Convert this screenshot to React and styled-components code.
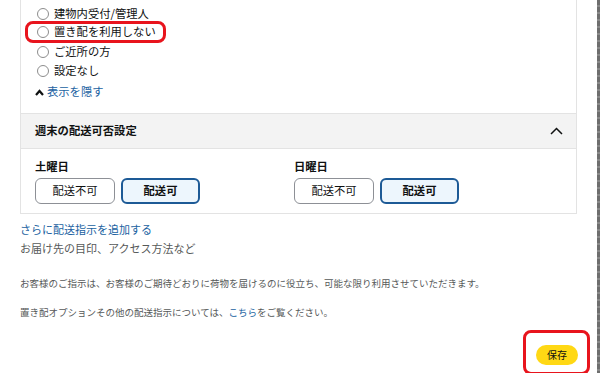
import React from 'react';
import styled, { createGlobalStyle } from 'styled-components';

const GlobalStyle = createGlobalStyle`
  html, body {
    margin: 0;
    padding: 0;
    background: #fff;
  }
  body {
    font-family: "Noto Sans CJK JP", "Noto Sans", sans-serif;
    color: #0f1111;
  }
`;

const Page = styled.div`
  width: 600px;
  height: 373px;
  overflow: hidden;
  display: flex;
`;

const Main = styled.div`
  width: 557px;
  padding-left: 20px;
  display: flex;
  flex-direction: column;
`;

const Gutter = styled.div`
  flex: 1;
`;

const ScrollEdge = styled.div`
  width: 3px;
  background: repeating-linear-gradient(
    180deg,
    #6e6e6e 0px,
    #6e6e6e 5px,
    #8a8a8a 5px,
    #8a8a8a 7px
  );
`;

const Panel = styled.div`
  border: 1px solid #e3e3e3;
  border-top: none;
`;

const RadioList = styled.div`
  padding: 4px 0 11px 16px;
  display: flex;
  flex-direction: column;
`;

const RadioRow = styled.label`
  display: flex;
  align-items: center;
  gap: 5px;
  height: 19px;
  font-size: 11.3px;
  line-height: 1;
  color: #0f1111;
  box-sizing: border-box;
  align-self: flex-start;

  ${({ $marked }) =>
    $marked &&
    `
    height: 22px;
    margin: -2px 0 -1px -12px;
    padding: 0 7px 0 9px;
    border: 3px solid #e8141d;
    border-radius: 8px;
  `}
`;

const Circle = styled.span`
  width: 10px;
  height: 10px;
  border: 1px solid #8d8d8d;
  border-radius: 50%;
  background: #fff;
`;

const ToggleLink = styled.a`
  display: flex;
  align-items: center;
  gap: 3px;
  height: 20px;
  margin-top: 2px;
  margin-left: -2px;
  font-size: 11.3px;
  line-height: 1;
  color: #2162a1;
  text-decoration: none;
`;

const SectionHeader = styled.div`
  height: 34px;
  background: #f3f3f3;
  border-top: 1px solid #e3e3e3;
  border-bottom: 1px solid #e3e3e3;
  display: flex;
  align-items: center;
  justify-content: space-between;
  padding: 0 13px 0 14px;
`;

const HeaderTitle = styled.span`
  font-size: 11.3px;
  font-weight: 700;
  line-height: 1;
`;

const SectionBody = styled.div`
  display: grid;
  grid-template-columns: 259px 1fr;
  padding: 10px 14px 9px 14px;
`;

const Day = styled.div`
  display: flex;
  flex-direction: column;
`;

const DayLabel = styled.span`
  font-size: 11.3px;
  font-weight: 700;
  line-height: 14px;
  margin-bottom: 5px;
`;

const ButtonRow = styled.div`
  display: flex;
  gap: 6px;
`;

const Choice = styled.button`
  box-sizing: border-box;
  height: 26px;
  width: ${({ $w }) => $w}px;
  border-radius: 6px;
  font-family: inherit;
  font-size: 11.3px;
  line-height: 1;
  padding: 0;
  cursor: pointer;
  color: #0f1111;
  border: ${({ $active }) => ($active ? '2px solid #1d5a96' : '1px solid #8d9096')};
  background: ${({ $active }) => ($active ? '#edf6fd' : '#fff')};
  font-weight: ${({ $active }) => ($active ? 700 : 400)};
`;

const Extra = styled.div`
  display: flex;
  flex-direction: column;
  margin-top: 7px;
`;

const AddLink = styled.a`
  font-size: 11px;
  line-height: 17px;
  color: #2162a1;
  text-decoration: none;
`;

const Hint = styled.span`
  font-size: 11px;
  line-height: 20px;
  color: #565959;
`;

const Note = styled.p`
  margin: ${({ $top }) => $top}px 0 0;
  font-size: 9.5px;
  line-height: 14px;
  color: #565959;
`;

const InlineLink = styled.a`
  color: #2162a1;
  text-decoration: none;
`;

const Footer = styled.div`
  display: flex;
  justify-content: flex-end;
  margin-top: 11px;
  margin-right: -13px;
`;

const Marked = styled.div`
  border: 3px solid #e8141d;
  border-radius: 8px;
  padding: 7px 9px 7px 10px;
`;

const SaveButton = styled.button`
  width: 42px;
  height: 20px;
  border: none;
  border-radius: 10px;
  background: #ffd814;
  font-family: inherit;
  font-size: 10px;
  line-height: 1;
  color: #0f1111;
  padding: 0;
`;

const options = ['建物内受付/管理人', '置き配を利用しない', 'ご近所の方', '設定なし'];

const days = [
  { label: '土曜日' },
  { label: '日曜日' },
];

const App = () => {
  return (
    <Page>
      <GlobalStyle />
      <Main>
        <Panel>
          <RadioList>
            {options.map((o, i) => (
              <RadioRow key={o} $marked={i === 1}>
                <Circle />
                {o}
              </RadioRow>
            ))}
            <ToggleLink href="#">
              <svg width="9" height="7" viewBox="0 0 9 7">
                <polyline points="1,6 4.5,2 8,6" fill="none" stroke="#0f1111" strokeWidth="2.2" />
              </svg>
              表示を隠す
            </ToggleLink>
          </RadioList>
          <SectionHeader>
            <HeaderTitle>週末の配送可否設定</HeaderTitle>
            <svg width="13" height="8" viewBox="0 0 13 8">
              <polyline points="1,7 6.5,1.5 12,7" fill="none" stroke="#0f1111" strokeWidth="1.5" />
            </svg>
          </SectionHeader>
          <SectionBody>
            {days.map((d) => (
              <Day key={d.label}>
                <DayLabel>{d.label}</DayLabel>
                <ButtonRow>
                  <Choice $w={80}>配送不可</Choice>
                  <Choice $w={79} $active>配送可</Choice>
                </ButtonRow>
              </Day>
            ))}
          </SectionBody>
        </Panel>
        <Extra>
          <AddLink href="#">さらに配送指示を追加する</AddLink>
          <Hint>お届け先の目印、アクセス方法など</Hint>
        </Extra>
        <Note $top={18}>
          お客様のご指示は、お客様のご期待どおりに荷物を届けるのに役立ち、可能な限り利用させていただきます。
        </Note>
        <Note $top={15}>
          置き配オプションその他の配送指示については、<InlineLink href="#">こちら</InlineLink>をご覧ください。
        </Note>
        <Footer>
          <Marked>
            <SaveButton>保存</SaveButton>
          </Marked>
        </Footer>
      </Main>
      <Gutter />
      <ScrollEdge />
    </Page>
  );
};

export default App;
